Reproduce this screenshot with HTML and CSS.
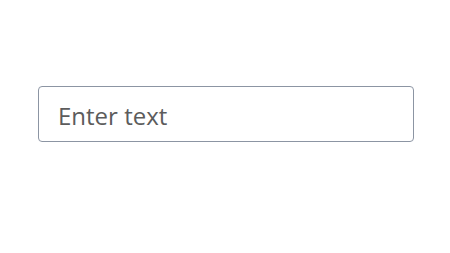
FILE: index.html
```html
<!DOCTYPE html>
<html lang="en">
<head>
    <meta charset="UTF-8">
    <meta name="viewport" content="width=device-width, initial-scale=1.0">
    <title>Text input</title>
    <link rel="stylesheet" href="styles.css">
</head>
<body>
    <div class="container">
        <input type="text" class="text-input" placeholder="Enter text">
    </div>
</body>
</html>
```

FILE: styles.css
```css
body {
    margin: 0;
    background: #fff;
    font-family: "Open Sans", sans-serif;
}

.container {
    padding: 86px 36px 0 38px;
}

.text-input {
    box-sizing: border-box;
    display: block;
    width: 376px;
    height: 56px;
    padding: 2px 19px 0;
    border: 1px solid #8c95a3;
    border-radius: 4px;
    font-family: "Open Sans", sans-serif;
    font-size: 24px;
    color: #555;
    outline: none;
}

.text-input::placeholder {
    color: #5c5c5c;
    opacity: 1;
}
```
